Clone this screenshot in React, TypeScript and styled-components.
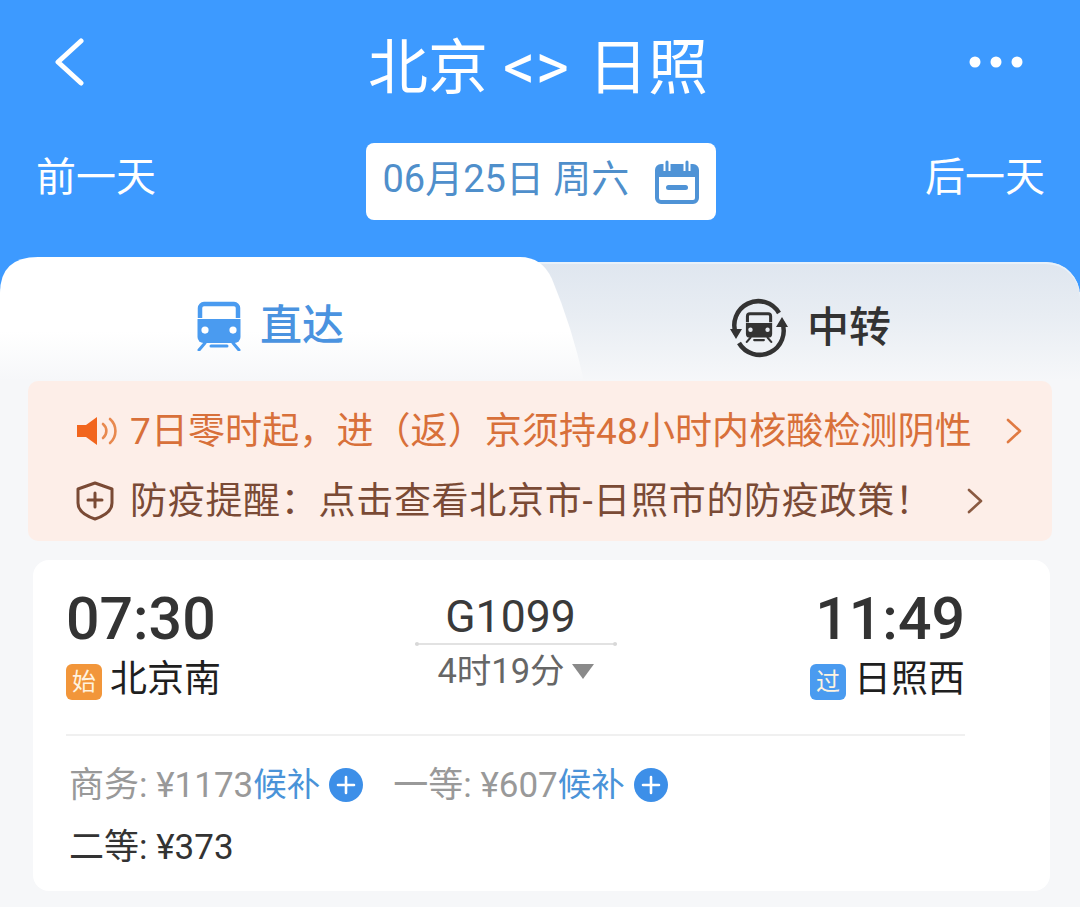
import React from "react"
import styled, { createGlobalStyle } from "styled-components"

const GlobalStyle = createGlobalStyle`
  html, body {
    margin: 0;
    padding: 0;
    background: #f6f7f9;
  }
  body {
    font-family: Roboto, "Noto Sans CJK SC", sans-serif;
  }
`

function BackIcon() {
  return (
    <svg width="34" height="48" viewBox="0 0 34 48" fill="none">
      <path d="M29 3 L6 24 L29 45" stroke="#fff" strokeWidth="5" strokeLinecap="round" strokeLinejoin="round" />
    </svg>
  )
}

function DotsIcon() {
  return (
    <svg width="56" height="14" viewBox="0 0 56 14" fill="#fff">
      <circle cx="7" cy="7" r="5.5" />
      <circle cx="28" cy="7" r="5.5" />
      <circle cx="49" cy="7" r="5.5" />
    </svg>
  )
}

function CalendarIcon() {
  return (
    <svg width="44" height="44" viewBox="0 0 44 44" fill="none">
      <rect x="2" y="6" width="40" height="36" rx="4" stroke="#4f93d6" strokeWidth="4" />
      <path d="M2 8 h40 v9 H2 Z" fill="#4f93d6" />
      <path d="M12 1 v10 M32 1 v10" stroke="#fff" strokeWidth="7" />
      <path d="M12 2 v9 M32 2 v9" stroke="#4f93d6" strokeWidth="3" strokeLinecap="round" />
      <rect x="11" y="25" width="22" height="5" rx="2.5" fill="#4f93d6" />
    </svg>
  )
}

function TrainIcon({ color, size, hole }: { color: string; size: number; hole: string }) {
  return (
    <svg width={size} height={size * 1.09} viewBox="0 0 46 50" fill="none">
      <path d="M4 17 V7 a4 4 0 0 1 4-4 h30 a4 4 0 0 1 4 4 v10" stroke={color} strokeWidth="4.5" />
      <path d="M1.5 18 h43 v18 a6 6 0 0 1-6 6 H7.5 a6 6 0 0 1-6-6 Z" fill={color} />
      <circle cx="9" cy="29" r="3.6" fill={hole} />
      <circle cx="37" cy="29" r="3.6" fill={hole} />
      <path d="M9 42 L3 49 M37 42 L43 49 M15 45 h16" stroke={color} strokeWidth="3" strokeLinecap="round" />
    </svg>
  )
}

function TransferIcon() {
  return (
    <svg width="60" height="60" viewBox="0 0 60 60" fill="none">
      <path d="M7 36 A24 24 0 0 1 50 15" stroke="#333" strokeWidth="4.5" />
      <path d="M53 24 A24 24 0 0 1 10 45" stroke="#333" strokeWidth="4.5" />
      <path d="M1 31 L13 31 L7 41 Z M59 29 L47 29 L53 19 Z" fill="#333" />
      <g transform="translate(16 14) scale(0.61)">
        <path d="M4 17 V7 a4 4 0 0 1 4-4 h30 a4 4 0 0 1 4 4 v10" stroke="#333" strokeWidth="5" />
        <path d="M1.5 18 h43 v18 a6 6 0 0 1-6 6 H7.5 a6 6 0 0 1-6-6 Z" fill="#333" />
        <circle cx="9" cy="29" r="3.6" fill="#e6eaf0" />
        <circle cx="37" cy="29" r="3.6" fill="#e6eaf0" />
        <path d="M9 42 L3 49 M37 42 L43 49 M15 46 h16" stroke="#333" strokeWidth="3.5" strokeLinecap="round" />
      </g>
    </svg>
  )
}

function SpeakerIcon() {
  return (
    <svg width="42" height="32" viewBox="0 0 42 32" fill="none">
      <path d="M1 10 h9 L21 2 v28 L10 22 H1 Z" fill="#f2651d" />
      <path d="M27 9 a9 9 0 0 1 0 14" stroke="#e8894f" strokeWidth="2.6" strokeLinecap="round" />
      <path d="M34 4 a16 16 0 0 1 0 24" stroke="#e8894f" strokeWidth="2.6" strokeLinecap="round" />
    </svg>
  )
}

function ShieldIcon() {
  return (
    <svg width="42" height="40" viewBox="0 0 42 40" fill="none">
      <path d="M19 2 L36 8 V22 C36 30 28 35 19 38 C10 35 2 30 2 22 V8 Z" stroke="#7a4a35" strokeWidth="3" strokeLinejoin="round" />
      <path d="M19 12 v14 M12 19 h14" stroke="#7a4a35" strokeWidth="3" strokeLinecap="round" />
    </svg>
  )
}

function Chevron({ color }: { color: string }) {
  return (
    <svg width="16" height="26" viewBox="0 0 16 26" fill="none">
      <path d="M2 2 L14 13 L2 24" stroke={color} strokeWidth="2.6" strokeLinecap="round" strokeLinejoin="round" />
    </svg>
  )
}

function PlusIcon() {
  return (
    <svg width="34" height="34" viewBox="0 0 34 34">
      <circle cx="17" cy="17" r="17" fill="#3d8fe8" />
      <path d="M9 17 h16 M17 9 v16" stroke="#fff" strokeWidth="2.6" strokeLinecap="round" />
    </svg>
  )
}

function App() {
  return (
    <Page>
      <GlobalStyle />
      <Header>
        <TitleRow>
          <BackButton>
            <BackIcon />
          </BackButton>
          <Title>
            北京 <Separator>&lt;&gt;</Separator> 日照
          </Title>
          <MoreButton>
            <DotsIcon />
          </MoreButton>
        </TitleRow>
        <DateRow>
          <DayLink>前一天</DayLink>
          <DatePill>
            <DateText>06月25日 周六</DateText>
            <CalendarIcon />
          </DatePill>
          <DayLink $right>后一天</DayLink>
        </DateRow>
      </Header>

      <TabStrip>
        <ActiveTab>
          <TrainIcon color="#4a9bf0" size={46} hole="#fff" />
          <TabLabel $color="#4a93e0">直达</TabLabel>
        </ActiveTab>
        <Tab>
          <TransferIcon />
          <TabLabel $color="#333">中转</TabLabel>
        </Tab>
      </TabStrip>

      <Notice>
        <NoticeRow>
          <SpeakerIcon />
          <NoticeText $color="#d8703a" $spacing={0.1}>7日零时起，进（返）京须持48小时内核酸检测阴性</NoticeText>
          <Chevron color="#e07a42" />
        </NoticeRow>
        <NoticeRow>
          <ShieldIcon />
          <NoticeText $color="#7a4a35" $spacing={0.7}>防疫提醒：点击查看北京市-日照市的防疫政策！</NoticeText>
          <Chevron color="#8a5a42" />
        </NoticeRow>
      </Notice>

      <Card>
        <TrainRow>
          <Stop>
            <Time>07:30</Time>
            <Station>
              <Badge $color="#f2963a">始</Badge>
              北京南
            </Station>
          </Stop>
          <Middle>
            <TrainNo>G1099</TrainNo>
            <Line />
            <Duration>
              4时19分
              <Caret />
            </Duration>
          </Middle>
          <Stop $right>
            <Time>11:49</Time>
            <Station>
              <Badge $color="#4a9bf0">过</Badge>
              日照西
            </Station>
          </Stop>
        </TrainRow>
        <Divider />
        <Prices>
          <Price>商务: ¥1173</Price>
          <Waitlist>候补</Waitlist>
          <PlusIcon />
          <Price $gap>一等: ¥607</Price>
          <Waitlist>候补</Waitlist>
          <PlusIcon />
        </Prices>
        <Prices>
          <Price $dark>二等: ¥373</Price>
        </Prices>
      </Card>
    </Page>
  )
}

const Page = styled.div`
  width: 1080px;
  height: 907px;
  overflow: hidden;
  background: #f6f7f9;
`

const Header = styled.header`
  height: 292px;
  background: #3d9aff;
  color: #fff;
`

const TitleRow = styled.div`
  display: grid;
  grid-template-columns: 1fr auto 1fr;
  align-items: center;
  height: 130px;
  padding: 0 56px 0 52px;
`

const BackButton = styled.div`
  display: flex;
  margin-top: -6px;
`

const MoreButton = styled.div`
  display: flex;
  justify-content: flex-end;
  margin-top: -6px;
`

const Title = styled.h1`
  margin: 5px 0 0;
  font-size: 60px;
  font-weight: 400;
  line-height: 1;
`

const Separator = styled.span`
  font-size: 64px;
  margin-right: 4px;
`

const DateRow = styled.div`
  display: grid;
  grid-template-columns: 1fr auto 1fr;
  align-items: center;
  padding: 13px 35px 0 36px;
`

const DayLink = styled.div<{ $right?: boolean }>`
  font-size: 40px;
  line-height: 1;
  margin-top: -8px;
  text-align: ${(p) => (p.$right ? "right" : "left")};
`

const DatePill = styled.div`
  display: flex;
  align-items: center;
  justify-content: space-between;
  box-sizing: border-box;
  width: 350px;
  height: 77px;
  padding: 0 17px 0 17px;
  background: #fff;
  border-radius: 8px;
  color: #4f8fcb;
`

const DateText = styled.span`
  font-size: 38px;
  line-height: 1;
  padding-bottom: 6px;
`

const TabStrip = styled.div`
  display: grid;
  grid-template-columns: 584px 1fr;
  height: 119px;
  margin-top: -30px;
  position: relative;
  background: linear-gradient(#dfe6ef, #e8edf3 45%, #f6f7f9);
  border-radius: 34px 34px 0 0;
  box-shadow: inset 0 2px 0 #e8f1fa;
`

const Tab = styled.div`
  display: flex;
  align-items: center;
  justify-content: center;
  gap: 18px;
  box-sizing: border-box;
  padding: 12px 44px 0 0;
  height: 119px;
`

const ActiveTab = styled(Tab)`
  height: 124px;
  margin-top: -5px;
  padding-top: 14px;
  background: linear-gradient(#fff 60%, #f6f7f9);
  clip-path: path("M0 124 V36 Q0 0 38 0 H520 Q542 0 552 22 Q572 70 584 124 Z");
`

const TabLabel = styled.span<{ $color: string }>`
  font-size: 42px;
  font-weight: 500;
  line-height: 1;
  color: ${(p) => p.$color};
`

const Notice = styled.section`
  display: flex;
  flex-direction: column;
  justify-content: center;
  gap: 22px;
  box-sizing: border-box;
  height: 160px;
  margin: 0 28px;
  padding: 10px 0 0 48px;
  background: #fdeee8;
  border-radius: 10px;
`

const NoticeRow = styled.div`
  display: flex;
  align-items: center;
  gap: 12px;
  height: 48px;
  & > svg:last-child {
    margin-left: 22px;
  }
`

const NoticeText = styled.span<{ $color: string; $spacing: number }>`
  font-size: 37px;
  line-height: 1;
  white-space: nowrap;
  letter-spacing: ${(p) => p.$spacing}px;
  color: ${(p) => p.$color};
`

const Card = styled.section`
  box-sizing: border-box;
  height: 331px;
  margin: 19px 30px 0 33px;
  padding: 28px 85px 0 33px;
  background: #fff;
  border-radius: 16px;
`

const TrainRow = styled.div`
  display: grid;
  grid-template-columns: 1fr 202px 1fr;
  align-items: start;
`

const Stop = styled.div<{ $right?: boolean }>`
  display: flex;
  flex-direction: column;
  align-items: ${(p) => (p.$right ? "flex-end" : "flex-start")};
`

const Time = styled.div`
  font-size: 59px;
  font-weight: 500;
  line-height: 62px;
  color: #333;
`

const Station = styled.div`
  display: flex;
  align-items: center;
  gap: 8px;
  margin-top: 5px;
  font-size: 37px;
  line-height: 50px;
  color: #1f1f1f;
`

const Badge = styled.span<{ $color: string }>`
  display: flex;
  align-items: center;
  justify-content: center;
  width: 36px;
  height: 36px;
  margin-top: 4px;
  border-radius: 6px;
  background: ${(p) => p.$color};
  color: #fff3e0;
  font-size: 24px;
  line-height: 1;
`

const Middle = styled.div`
  display: flex;
  flex-direction: column;
  align-items: center;
  padding-top: 4px;
`

const TrainNo = styled.div`
  font-size: 44.5px;
  line-height: 50px;
  padding-right: 10px;
  color: #3a3a3a;
`

const Line = styled.div`
  position: relative;
  width: 100%;
  height: 2px;
  margin-top: 1px;
  background: #e2e2e2;
  &::before,
  &::after {
    content: "";
    position: absolute;
    top: -1px;
    width: 4px;
    height: 4px;
    border-radius: 50%;
    background: #d8d8d8;
  }
  &::before {
    left: 0;
  }
  &::after {
    right: 0;
  }
`

const Duration = styled.div`
  display: flex;
  align-items: center;
  gap: 7px;
  font-size: 34.5px;
  line-height: 52px;
  color: #666;
`

const Caret = styled.span`
  width: 0;
  height: 0;
  border-left: 11px solid transparent;
  border-right: 11px solid transparent;
  border-top: 15px solid #8a8a8a;
`

const Divider = styled.div`
  height: 2px;
  margin: 29px 0 18px;
  background: #f0f0f0;
`

const Prices = styled.div`
  display: flex;
  align-items: center;
  height: 62px;
  margin-left: 3px;
`

const Price = styled.span<{ $gap?: boolean; $dark?: boolean }>`
  font-size: 35px;
  line-height: 1;
  margin-left: ${(p) => (p.$gap ? "30px" : "0")};
  color: ${(p) => (p.$dark ? "#333" : "#999")};
`

const Waitlist = styled.span`
  font-size: 33.5px;
  line-height: 1;
  margin-right: 9px;
  color: #4a93d8;
`

export default App
